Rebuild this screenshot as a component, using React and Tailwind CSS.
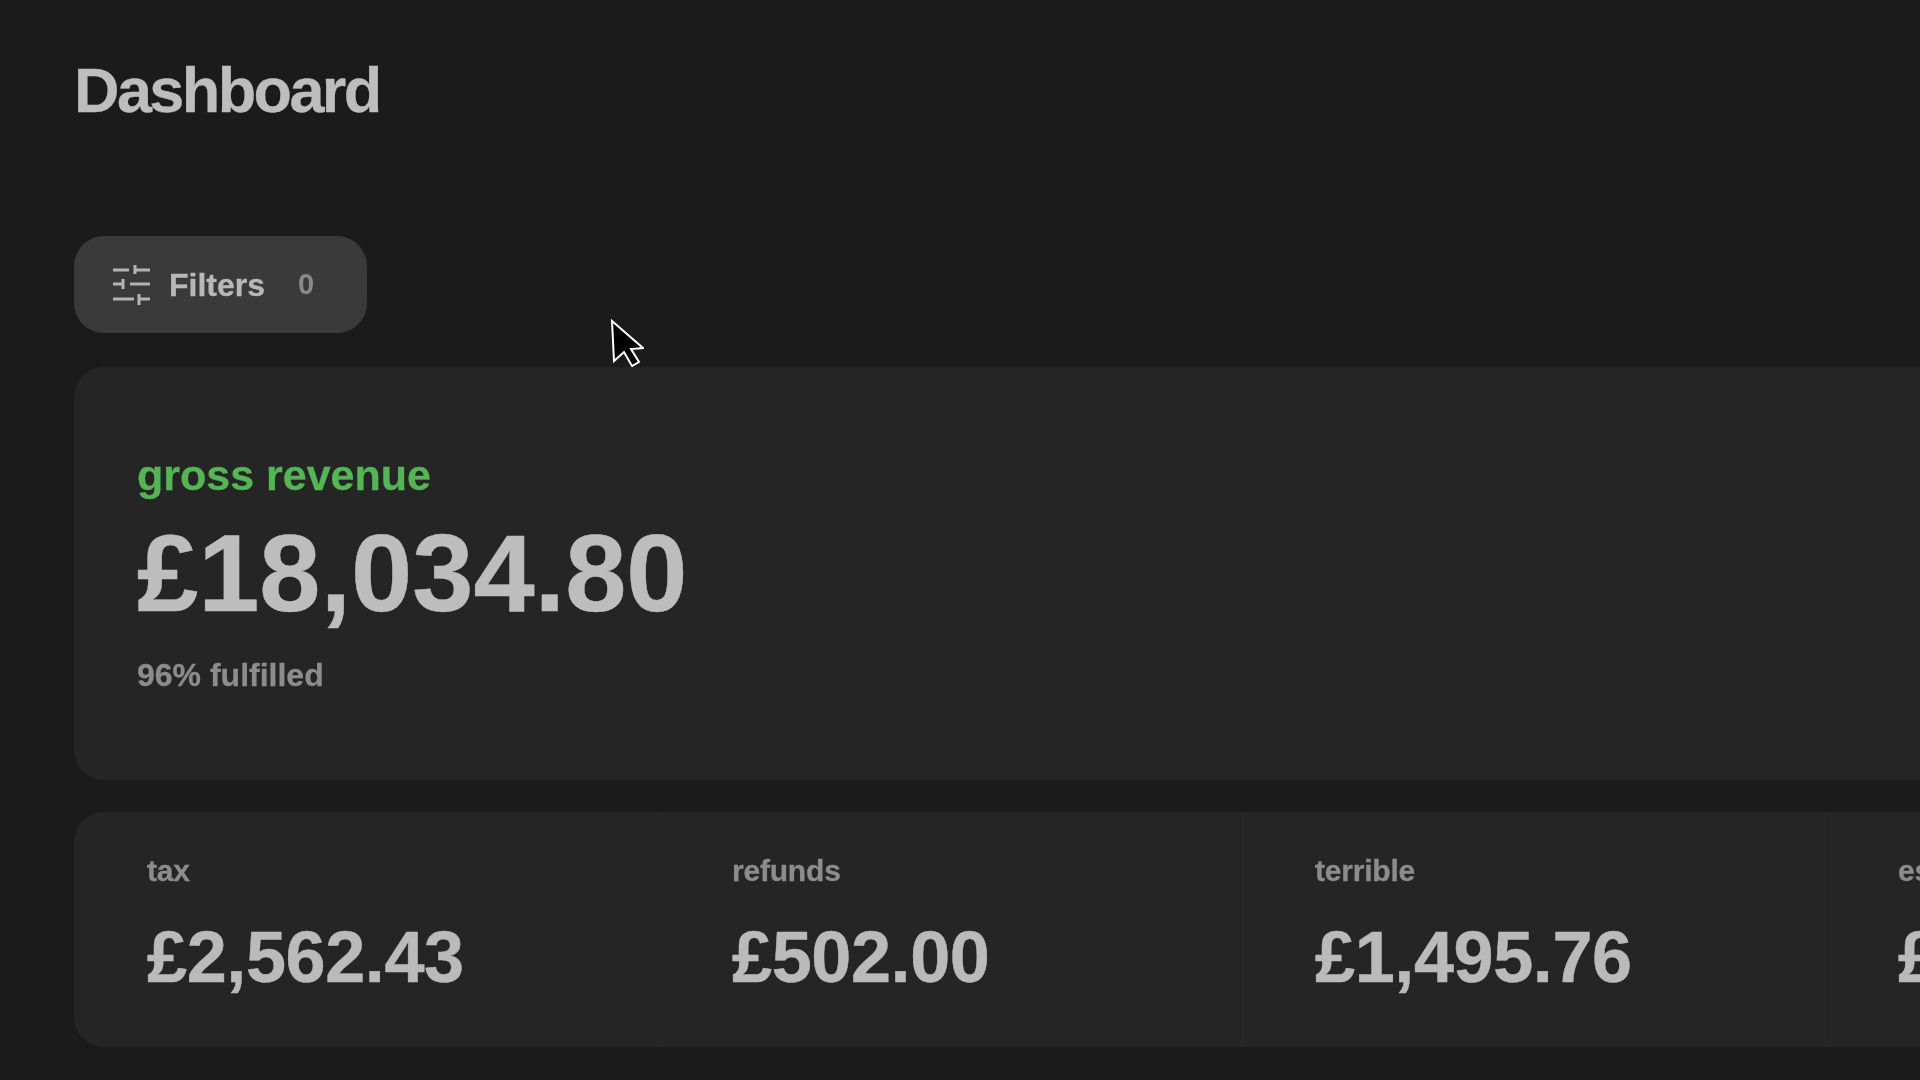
const text = "[font-family:'Liberation_Sans',Arial,sans-serif]";

function FiltersIcon() {
  return (
    <svg viewBox="0 0 37 41" className="w-[37px] h-[41px] shrink-0" fill="none" stroke="#b4b4b4" strokeWidth="3">
      <path d="M0 6H16M22 6H37M22 1V10M0 20H10M10 15V25M17 20H37M0 35H21M25 35H37M26 30V41" />
    </svg>
  );
}

function Cursor() {
  return (
    <svg viewBox="0 0 34 48" className="absolute left-[610px] top-[319px] w-[34px] h-[48px]">
      <path d="M2 2L4 42L14 33L22 47L29 43L21 30L33 29Z" fill="#000" stroke="#fff" strokeWidth="2" strokeLinejoin="miter" />
    </svg>
  );
}

function Stat({ label, value, first }) {
  return (
    <div className={first ? "w-[585px] shrink-0 pl-[73px] pt-[41px]" : "w-[583px] shrink-0 pl-[72px] pt-[41px] border-l border-[#292929]"}>
      <div className="text-[30px] leading-[36px] tracking-[-0.2px] font-bold [-webkit-text-stroke:0.3px] text-[#8c8c8c]">{label}</div>
      <div className="mt-[27px] text-[72px] leading-[82px] tracking-[-0.4px] font-bold [-webkit-text-stroke:0.5px] text-[#bababa]">{value}</div>
    </div>
  );
}

export default function App() {
  return (
    <div className={`relative w-[1920px] h-[1080px] overflow-hidden bg-[#1b1b1b] pl-[74px] blur-[0.5px] ${text}`}>
      <h1 className="pt-[54px] text-[63px] leading-[72px] tracking-[-2.6px] font-bold [-webkit-text-stroke:0.3px] text-[#bdbdbd]">Dashboard</h1>
      <button className="mt-[110px] flex items-center w-[293px] h-[97px] rounded-[30px] bg-[#3a3a3a] pl-[39px]">
        <FiltersIcon />
        <span className="ml-[19px] text-[32px] font-bold [-webkit-text-stroke:0.3px] text-[#b8b8b8]">Filters</span>
        <span className="ml-[33px] text-[29px] font-bold text-[#8a8a8a]">0</span>
      </button>
      <div className="mt-[34px] w-[2400px] h-[413px] rounded-[30px] bg-[#252525] pl-[63px] pt-[83px]">
        <div className="text-[43px] leading-[50px] font-bold [-webkit-text-stroke:0.3px] text-[#55b555]">gross revenue</div>
        <div className="mt-[13px] text-[110px] leading-[120px] font-bold [-webkit-text-stroke:0.5px] text-[#bdbdbd]">£18,034.80</div>
        <div className="mt-[23px] text-[32px] leading-[38px] font-bold [-webkit-text-stroke:0.3px] text-[#8c8c8c]">96% fulfilled</div>
      </div>
      <div className="mt-[32px] flex w-[2400px] h-[235px] rounded-[30px] bg-[#252525]">
        <Stat first label="tax" value="£2,562.43" />
        <Stat label="refunds" value="£502.00" />
        <Stat label="terrible" value="£1,495.76" />
        <Stat label="estimated" value="£0.00" />
      </div>
      <Cursor />
    </div>
  );
}
